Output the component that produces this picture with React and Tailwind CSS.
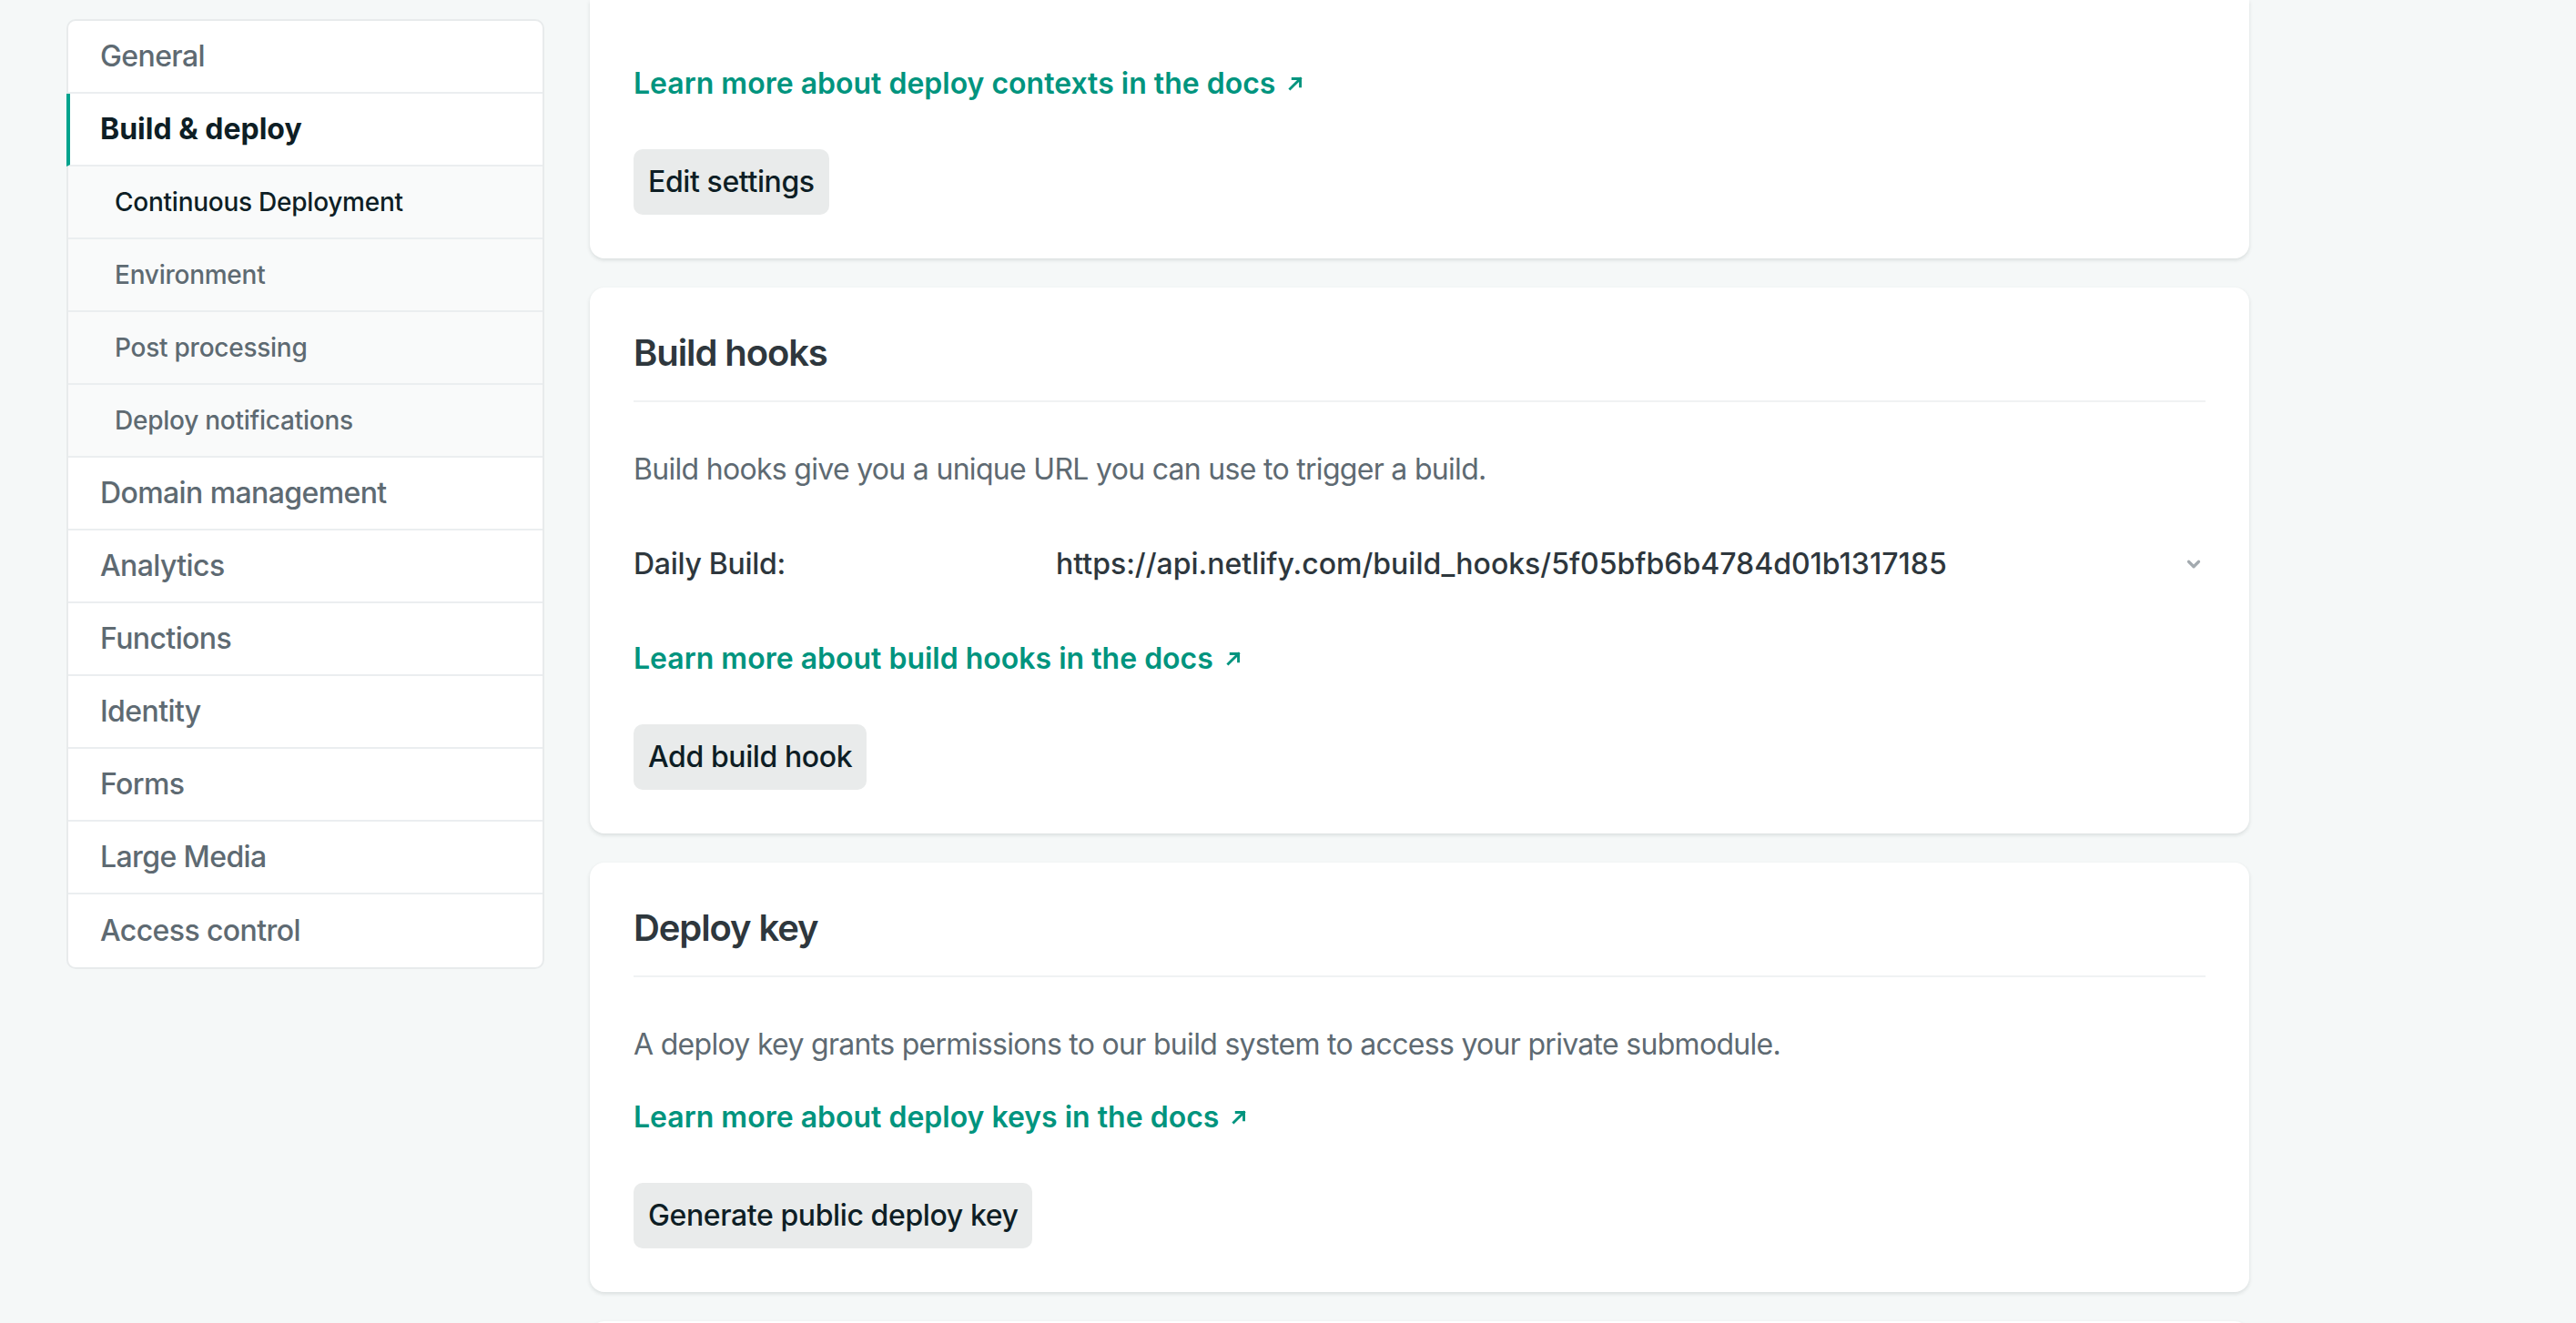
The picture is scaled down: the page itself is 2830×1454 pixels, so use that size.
import { ChevronDown } from 'lucide-react';

const navTop = ['General'];
const subItems = ['Continuous Deployment', 'Environment', 'Post processing', 'Deploy notifications'];
const navBottom = ['Domain management', 'Analytics', 'Functions', 'Identity', 'Forms', 'Large Media', 'Access control'];

function Arrow() {
  return (
    <svg width="20" height="20" viewBox="0 0 18 18" className="inline-block ml-[12px] -mt-[4px]" fill="none">
      <path d="M4 14L14 4M6.5 4H14V11.5" stroke="currentColor" strokeWidth="2.6" strokeLinecap="square" />
    </svg>
  );
}

function DocLink({ children, className = '' }) {
  return (
    <a className={`block text-[32px] leading-[48px] font-semibold text-[#00947e] ${className}`}>
      {children}
      <Arrow />
    </a>
  );
}

function Button({ children, className = '' }) {
  return (
    <button className={`h-[72px] px-[16px] rounded-[10px] bg-[#e9ebeb] text-[32px] font-medium tracking-[-0.4px] text-[#0e1e25] ${className}`}>
      {children}
    </button>
  );
}

function CardTitle({ children }) {
  return (
    <div className="pb-[28px] border-b-2 border-[#f0f2f3]">
      <h2 className="text-[40px] leading-[48px] font-semibold tracking-[-1.1px] text-[#2e373d]">{children}</h2>
    </div>
  );
}

export default function App() {
  return (
    <div className="h-[1454px] overflow-hidden bg-[#f5f8f8] font-['Inter',sans-serif] flex">
      {/* sidebar */}
      <aside className="ml-[73px] pt-[21px] w-[525px] shrink-0">
        <nav className="bg-white border-2 border-[#e8ebec] rounded-[10px]">
          {navTop.map((n) => (
            <div key={n} className="h-[80px] flex items-center pl-[35px] border-b-2 border-[#ebeef0] text-[32px] font-medium tracking-[-0.6px] text-[#5e6a72]">
              {n}
            </div>
          ))}
          <div className="h-[80px] flex items-center -ml-[2px] pl-[33px] border-l-4 border-l-[#00a38d] border-b-2 border-b-[#ebeef0] text-[32px] font-bold text-[#0e1e25]">
            Build &amp; deploy
          </div>
          {subItems.map((n, i) => (
            <div
              key={n}
              className={`h-[80px] flex items-center pl-[51px] bg-[#f9fafa] border-b-2 border-[#ebeef0] text-[28px] font-medium tracking-[-0.25px] ${
                i === 0 ? 'text-[#0e1e25]' : 'text-[#5e6a72]'
              }`}
            >
              {n}
            </div>
          ))}
          {navBottom.map((n, i) => (
            <div
              key={n}
              className={`h-[80px] flex items-center pl-[35px] text-[32px] font-medium tracking-[-0.6px] text-[#5e6a72] ${
                i === navBottom.length - 1 ? 'h-[78px]' : 'border-b-2 border-[#ebeef0]'
              }`}
            >
              {n}
            </div>
          ))}
        </nav>
      </aside>

      {/* main */}
      <main className="ml-[50px] w-[1823px] shrink-0 flex flex-col gap-[32px]">
        {/* deploy contexts (scrolled) */}
        <section className="bg-white rounded-b-[16px] shadow-[0_2px_4px_0_rgba(14,30,37,0.12)] px-[48px] pt-[68px] pb-[48px]">
          <DocLink>Learn more about deploy contexts in the docs</DocLink>
          <Button className="mt-[48px]">Edit settings</Button>
        </section>

        {/* build hooks */}
        <section className="bg-white rounded-[16px] shadow-[0_2px_4px_0_rgba(14,30,37,0.12)] p-[48px]">
          <CardTitle>Build hooks</CardTitle>
          <p className="mt-[50px] text-[32px] leading-[48px] tracking-[-0.7px] text-[#5e6a72]">
            Build hooks give you a unique URL you can use to trigger a build.
          </p>
          <div className="mt-[56px] flex items-center text-[32px] leading-[48px] font-medium text-[#2e373d]">
            <span className="w-[464px] shrink-0 tracking-[-0.3px]">Daily Build:</span>
            <span className="flex-1">https://api.netlify.com/build_hooks/5f05bfb6b4784d01b1317185</span>
            <ChevronDown size={22} strokeWidth={3.5} className="text-[#a3aaaf] mr-[2px]" />
          </div>
          <DocLink className="mt-[56px]">Learn more about build hooks in the docs</DocLink>
          <Button className="mt-[48px]">Add build hook</Button>
        </section>

        {/* deploy key */}
        <section className="bg-white rounded-[16px] shadow-[0_2px_4px_0_rgba(14,30,37,0.12)] p-[48px]">
          <CardTitle>Deploy key</CardTitle>
          <p className="mt-[50px] text-[32px] leading-[48px] tracking-[-0.7px] text-[#5e6a72]">
            A deploy key grants permissions to our build system to access your private submodule.
          </p>
          <DocLink className="mt-[32px]">Learn more about deploy keys in the docs</DocLink>
          <Button className="mt-[48px]">Generate public deploy key</Button>
        </section>

        {/* next card, mostly below the fold */}
        <section className="bg-white rounded-t-[16px] shadow-[0_2px_4px_0_rgba(14,30,37,0.12)] h-[400px] shrink-0" />
      </main>
    </div>
  );
}
